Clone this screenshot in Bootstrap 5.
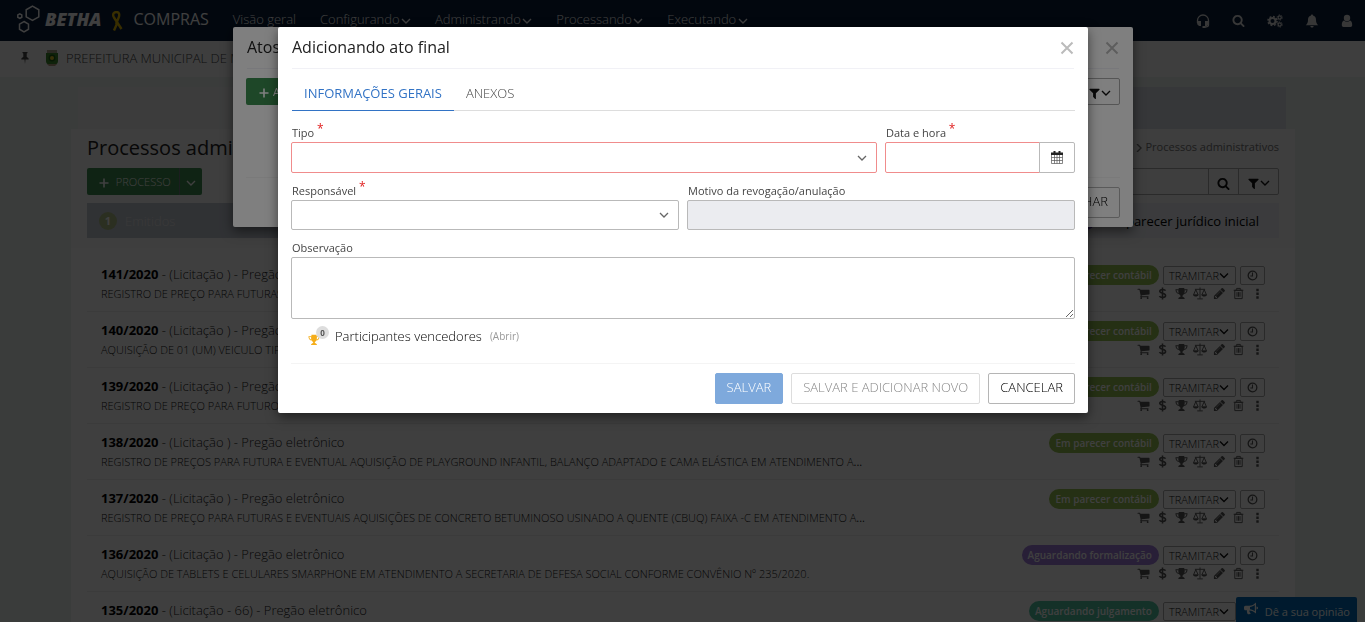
<!DOCTYPE html>
<html lang="pt-BR">
<head>
<meta charset="utf-8">
<meta name="viewport" content="width=device-width, initial-scale=1">
<title>Compras - Processos administrativos</title>
<link href="https://cdn.jsdelivr.net/npm/bootstrap@5.3.0/dist/css/bootstrap.min.css" rel="stylesheet">
<style>
body{font-family:"Open Sans","Noto Sans",sans-serif;font-size:13px;font-weight:300;line-height:20px;color:#444;background:#ebf0ee;overflow:hidden}
svg{fill:currentColor;flex:none}
.chev{fill:none;stroke:currentColor;stroke-width:1.4}
.btn,.form-control,.form-select{font-size:13px;font-weight:300;line-height:20px;border-radius:2px}
a{color:inherit;text-decoration:none}
.topbar{height:41px;background:#0a1e3a;color:#fff;padding:0 12px 0 16px}
.topbar nav{gap:24px;padding-bottom:3px}
.topbar nav svg{margin-left:-2px}
.topbar .tools{gap:22px;padding-bottom:3px;color:#ddd}
.brand{padding-bottom:4px}
.brand-name{font-size:18px;font-weight:800;font-style:italic}
.brand-app{font-size:16px}
.entity{height:36px;background:#f9f9f9;padding:0 20px 2px;color:#444}
.page-wrap{padding:10px 70px 0 71px}
.banner{height:42px;margin:0 9px 0 7px;background:linear-gradient(90deg,#f1f3f3 50%,#d9dce4 50%)}
.page-head{background:#f8f8f8;padding:7px 16px 10px}
.page-head h1{font-size:20px;line-height:24px;color:#222}
.crumbs{font-size:11px;font-weight:400;color:#777;padding-bottom:2px}
.btn-new{background:#3d8e50;color:#fff;height:27px;padding:0 9px;border:0;font-size:11px;font-weight:400}
.btn-new:hover{background:#337a43;color:#fff}
.btn-new.process{padding:0 9px 0 8px;font-weight:300}
.btn-new.split{padding:0 6px}
.btn-line{background:#fff;border:1px solid #aaa;color:#111;padding:0 8px}
.searchbox{width:300px;height:27px}
.searchbox .btn,.searchbox .form-control{background:transparent;border-color:#aaa}
.steps{height:35px;margin-top:8px;background:#c2c8d2;font-size:13px}
.steps .first-step{color:#e6e6e6}
.steps .last-step{background:#eceff5;color:#000;padding:0 20px 0 12px}
.dot{width:18px;height:18px;border-radius:50%;color:#fff;font-size:11px;font-weight:700;line-height:18px;text-align:center}
.records{background:#fff;padding:8px 16px 0}
.record{height:56px;padding:9px 14px 0;border-bottom:1px solid #eee}
.record h2{font-size:13px;line-height:19px;font-weight:300;color:#222;margin:0}
.record h2 b{color:#000;font-weight:700}
.record p{font-size:11px;line-height:19px;margin:0;color:#111}
.pill{font-size:10px;font-weight:600;color:#fff;height:20px;line-height:20px;padding:0 7px 0 6px;border-radius:10px}
.btn-flow{height:19px;line-height:17px;font-size:11px;padding:0 5px;display:flex;align-items:center}
.btn-flow.tram{padding:0 6px 0 5px}
.btn-flow.clock{width:25px;color:#555;justify-content:center}
.acts{height:17px;gap:5px;margin-right:1px;color:#555}
.acts a{width:14px;display:flex;justify-content:center}
.opinion{position:fixed;right:8px;bottom:0;height:25px;background:#006bb8;color:#fff;padding:5px 7px 0 8px;font-size:11px;font-weight:400;gap:7px;border-radius:2px 2px 0 0}
.modal{padding-left:1px;overflow:hidden}
.modal-backdrop{opacity:.5}
.modal-dialog{margin:27px auto 0}
.dialog-list{max-width:900px}
.dialog-form{max-width:810px}
.modal-content{border:0;border-radius:2px;box-shadow:0 4px 12px rgba(0,0,0,.5)}
.modal-header{padding:0 0 1px;margin:0 14px;height:42px;border-bottom:1px solid #f1f1f6;border-radius:0}
.modal-title{font-size:16px;line-height:22px;font-weight:400;color:#222}
.close-x{border:0;background:none;padding:2px 0 0;color:#bbb;line-height:0}
.modal-body{padding:0 13px}
.modal-footer{padding:9px 0;margin:0 13px;border-top:1px solid #f4f4f4;gap:8px;border-radius:0}
.modal-footer>*{margin:0}
.modal-footer .btn{height:31px;padding:0 11px 3px;border:1px solid #b5b5b5;color:#000}
.modal-footer .btn-save{background:#7ea9dc;border-color:#7ea9dc;color:#fff;opacity:1}
.modal-footer .btn-again{border-color:#ddd;color:#888;opacity:1}
.tabs-line{height:42px;border-bottom:1px solid #ddd;margin:0 0 0 1px}
.tabs-line .nav-link{color:#444;border:0;padding:14px 12px 6px;border-radius:0;height:42px}
.tabs-line .nav-link.active{color:#3273c5;font-weight:500;border-bottom:1px solid #3273c5}
.form-label{font-size:11px;font-weight:400;line-height:13px;height:13px;color:#444;margin:0 0 3px;padding-left:1px}
.form-label sup{color:#e02020;font-size:12px;top:-4px}
.field{padding-top:11px}
.form-area .form-control,.form-area .form-select,.form-area .input-group .btn{border:1px solid #b9b9b9;height:30px}
.form-area .form-control.needed,.form-area .form-select.needed{border-color:#f08c8c}
.form-area .first-line .form-control,.form-area .first-line .form-select,.form-area .first-line .btn{height:31px}
.form-area .first-line .btn{padding:0 11px;display:flex;align-items:center}
.form-area .first-line .field{padding-top:15px}
.form-select{background-size:10px;background-position:right 9px center;background-image:url("data:image/svg+xml,%3Csvg xmlns='http://www.w3.org/2000/svg' viewBox='0 0 10 10'%3E%3Cpath d='M1 3l4 4 4-4' fill='none' stroke='%23666' stroke-width='1.3'/%3E%3C/svg%3E")}
.form-area .form-control:disabled{background:#ebecf0}
.form-area textarea.form-control{height:62px;resize:vertical}
.winners{padding:7px 0 17px 17px;color:#000}
.winners a{font-size:10px;font-weight:400;color:#999}
.trophy{position:relative;width:23px;height:20px;color:#f5ae1b}
.trophy span{position:absolute;left:8px;top:0;width:13px;height:13px;border-radius:50%;background:#ddd;color:#555;font-size:8px;font-weight:700;line-height:13px;text-align:center}
.list-area{height:108px;padding-top:9px}
</style>
</head>
<body>
<svg width="0" height="0" class="position-absolute" aria-hidden="true">
<symbol id="search" viewBox="0 0 1792 1792"><path d="M1216 832q0-185-131.500-316.500t-316.500-131.500-316.500 131.500-131.500 316.500 131.500 316.500 316.500 131.500 316.500-131.500 131.500-316.500zm512 832q0 52-38 90t-90 38q-54 0-90-38l-343-342q-179 124-399 124-143 0-273.500-55.500t-225-150-150-225-55.500-273.500 55.500-273.500 150-225 225-150 273.500-55.500 273.500 55.500 225 150 150 225 55.500 273.500q0 220-124 399l343 343q37 37 37 90z"/></symbol>
<symbol id="filter" viewBox="0 0 1792 1792"><path d="M1595 295q17 41-14 70l-493 493v742q0 42-39 59-13 5-25 5-27 0-45-19l-256-256q-19-19-19-45v-486l-493-493q-31-29-14-70 17-39 59-39h1280q42 0 59 39z"/></symbol>
<symbol id="pencil" viewBox="0 0 1792 1792"><path d="M491 1536l91-91-235-235-91 91v107h128v128h107zm523-928q0-22-22-22-10 0-17 7l-542 542q-7 7-7 17 0 22 22 22 10 0 17-7l542-542q7-7 7-17zm-54-192l416 416-832 832h-416v-416zm683 96q0 53-37 90l-166 166-416-416 166-165q36-38 90-38 53 0 91 38l235 234q37 39 37 91z"/></symbol>
<symbol id="cart" viewBox="0 0 1792 1792"><path d="M704 1536q0 52-38 90t-90 38-90-38-38-90 38-90 90-38 90 38 38 90zm896 0q0 52-38 90t-90 38-90-38-38-90 38-90 90-38 90 38 38 90zm128-1088v512q0 24-16.500 42.500t-40.500 21.500l-1044 122q13 60 13 70 0 16-24 64h920q26 0 45 19t19 45-19 45-45 19h-1024q-26 0-45-19t-19-45q0-11 8-31.500t16-36 21.500-40 15.500-29.500l-177-823h-204q-26 0-45-19t-19-45 19-45 45-19h256q16 0 28.500 6.500t19.500 15.500 13 24.500 8 26 5.500 29.500 4.500 26h1201q26 0 45 19t19 45z"/></symbol>
<symbol id="down" viewBox="0 0 10 10"><path d="M1 3l4 4 4-4" class="chev"/></symbol>
<symbol id="cross" viewBox="0 0 14 14"><path d="M1.500 1.500l11 11M12.500 1.500l-11 11" fill="none" stroke="currentColor" stroke-width="2"/></symbol>
<symbol id="plus" viewBox="0 0 10 10"><path d="M5 .5v9M.5 5h9" fill="none" stroke="currentColor" stroke-width="1.600"/></symbol>
<symbol id="clock" viewBox="0 0 12 12"><path d="M6 3.300V6.500H4" fill="none" stroke="currentColor"/><circle cx="6" cy="6" r="4" fill="none" stroke="currentColor" stroke-width="1.200"/></symbol>
<symbol id="dollar" viewBox="0 0 10 14"><path d="M5 .5v13M8.300 4C7.600 2.600 2 1.800 2 4.700c0 2.700 6.300 1.500 6.300 4.500 0 2.900-5.600 2.500-6.600.7" fill="none" stroke="currentColor" stroke-width="1.700"/></symbol>
<symbol id="trophy" viewBox="0 0 14 14"><path d="M4 1h6v1.500h3.500c0 3.200-1.300 4.700-3.900 5C9 8.800 7.900 9 7.900 10c0 .9 2.600 1 2.600 2.800h-7c0-1.800 2.600-1.900 2.600-2.800 0-1-1.100-1.200-1.700-2.500C1.800 7.200.5 5.700.5 2.500H4zM1.600 3.500c.2 1.700.9 2.600 2.300 2.900-.3-.9-.4-1.900-.3-2.900zm8.800 0c0 1 0 2-.3 2.900 1.400-.3 2.100-1.200 2.300-2.900z"/></symbol>
<symbol id="scale" viewBox="0 0 16 14"><path d="M8 .5v12M2.500 2.500h11M5 12.800h6M3.500 2.800L1 8.500h5zM12.500 2.800L10 8.500h5z" fill="none" stroke="currentColor"/><path d="M.5 8.300h6c-.5 2.500-5.500 2.500-6 0zM9.500 8.300h6c-.5 2.500-5.500 2.500-6 0z"/></symbol>
<symbol id="trash" viewBox="0 0 12 14"><path d="M2 3.500h8v9H2zM.8 3.500h10.400M4 3V1.500h4V3M4.400 5.500v5M6 5.500v5M7.600 5.500v5" fill="none" stroke="currentColor"/></symbol>
<symbol id="dots" viewBox="0 0 4 14"><path d="M.7 2h2.600v2.600H.7zM.7 6h2.600v2.600H.7zM.7 10h2.600v2.600H.7z"/></symbol>
</svg>

<header class="topbar d-flex align-items-center justify-content-between">
 <div class="d-flex align-items-center">
  <div class="brand d-flex align-items-center">
   <svg width="25" height="28" viewBox="0 0 24 28"><g fill="none" stroke="#fff" stroke-width="1.500"><path d="M16 1.200l6.300 3.600v7L16 15.400l-6.300-3.600v-7z"/><path d="M7.500 16.500l4.500 2.600v5.100l-4.500 2.600L3 24.200v-5.100z"/><path d="M3.300 8.800l2 1.100v2.300l-2 1.100-2-1.100V9.900z"/></g></svg>
   <span class="brand-name ms-1">BETHA</span>
   <svg class="ms-2 mt-1" width="16" height="20" viewBox="0 0 14 20" aria-hidden="true"><path d="M4 19.500l3.500-8M11.500 18L4 6.500C2 3 4 1 6.500 1S10 3.500 8.500 7L6 13" fill="none" stroke="#e3b800" stroke-width="2.400"/></svg>
   <span class="brand-app ms-2 fw-normal">COMPRAS</span>
  </div>
  <nav class="d-flex ms-4">
   <a href="#">Visão geral</a>
   <a href="#">Configurando <svg width="10" height="10"><use href="#down"/></svg></a>
   <a href="#">Administrando <svg width="10" height="10"><use href="#down"/></svg></a>
   <a href="#">Processando <svg width="10" height="10"><use href="#down"/></svg></a>
   <a href="#">Executando <svg width="10" height="10"><use href="#down"/></svg></a>
  </nav>
 </div>
 <div class="tools d-flex align-items-center">
  <a href="#" aria-label="Suporte"><svg width="14" height="14" viewBox="0 0 14 14"><path d="M1.500 9V6.500a5.500 5.500 0 0 1 11 0V11c0 1.500-1 2-4 2" fill="none" stroke="currentColor" stroke-width="1.300"/><path d="M2 7h3v5H3L1 10zM12 7H9v5h2l2-2zM6.500 12h3v2h-3z"/></svg></a>
  <a href="#" aria-label="Pesquisar"><svg width="13" height="13"><use href="#search"/></svg></a>
  <a href="#" aria-label="Ajustes"><svg width="16" height="14" viewBox="0 0 16 14"><circle cx="5.500" cy="7" r="3" fill="none" stroke="currentColor" stroke-width="2"/><circle cx="5.500" cy="7" r="4.500" fill="none" stroke="currentColor" stroke-width="1.600" stroke-dasharray="1.800 1.730"/><g fill="none" stroke="currentColor"><circle cx="12.700" cy="3.500" r="1.600" stroke-width="1.200"/><circle cx="12.700" cy="3.500" r="2.600" stroke-dasharray="1.200 1.520"/><circle cx="12.700" cy="10.500" r="1.600" stroke-width="1.200"/><circle cx="12.700" cy="10.500" r="2.600" stroke-dasharray="1.200 1.520"/></g></svg></a>
  <a href="#" aria-label="Notificações"><svg width="14" height="14" viewBox="0 0 14 14"><path d="M7 .5c.7 0 1 .4 1 1C10.500 2 11 4 11 6c0 2.500.8 4 2.200 5.200H.8C2.200 10 3 8.500 3 6c0-2 .5-4 3-4.500 0-.6.300-1 1-1zM5.400 12h3.200c0 2-3.200 2-3.200 0z"/></svg></a>
  <a href="#" aria-label="Usuário"><svg width="12" height="14" viewBox="0 0 12 14"><circle cx="6" cy="4" r="3.200"/><path d="M3 6.500c1.800 1.700 4.200 1.700 6 0 1.500.5 2.200 2 2.200 4.500 0 1.200-.7 2-1.700 2h-7c-1 0-1.700-.8-1.700-2C.8 8.500 1.500 7 3 6.500z"/></svg></a>
 </div>
</header>
<div class="entity d-flex align-items-center">
 <svg width="10" height="12" viewBox="0 0 10 12"><path d="M2.500 0h5v1l-.8.600V5c1.300.5 2 1.200 2 2.400H5.500L5 12l-.5-4.600H1.300c0-1.200.7-1.900 2-2.400V1.600L2.500 1z"/></svg>
 <svg class="ms-3" width="12" height="18" viewBox="0 0 12 18"><path d="M1 1h10v3H1z" fill="#a8a08a"/><path d="M0 4h12v8c0 3-3 4-6 5-3-1-6-2-6-5z" fill="#3d8a2c"/><circle cx="6" cy="9" r="3.400" fill="#1d5c16"/><circle cx="6" cy="9" r="2" fill="#e0c020"/><path d="M1 15h10l-2 2H3z" fill="#b09b7c"/></svg>
 <a href="#" class="ms-2">PREFEITURA MUNICIPAL DE MOGI</a>
</div>

<main class="page-wrap">
 <div class="banner"></div>
 <section class="page-head">
  <div class="d-flex justify-content-between align-items-center">
   <h1 class="mb-0 fw-normal">Processos administrativos</h1>
   <div class="crumbs">Executando <svg width="8" height="8" viewBox="0 0 8 8"><path d="M2 0l4 4-4 4" class="chev"/></svg> <a href="#">Processos administrativos</a></div>
  </div>
  <div class="d-flex justify-content-between mt-2">
   <div class="btn-group"><button class="btn btn-new process"><svg width="10" height="10" class="me-1 ms-1"><use href="#plus"/></svg> PROCESSO</button><button class="btn btn-new split border-start border-secondary" aria-label="Mais opções"><svg width="10" height="10"><use href="#down"/></svg></button></div>
   <div class="searchbox input-group flex-nowrap"><input class="form-control" aria-label="Pesquisar processos"><button class="btn btn-line" aria-label="Pesquisar"><svg width="13" height="13"><use href="#search"/></svg></button><button class="btn btn-line" aria-label="Filtrar"><svg width="13" height="13"><use href="#filter"/></svg><svg width="10" height="10"><use href="#down"/></svg></button></div>
  </div>
  <div class="steps d-flex justify-content-between">
   <div class="first-step d-flex align-items-center ms-2 ps-1 gap-2"><span class="dot" style="background:#aebd86">1</span><span>Emitidos</span></div>
   <div class="last-step d-flex align-items-center gap-2 fw-normal"><span class="dot" style="background:#6a3fc0">1</span><span>Em parecer jurídico inicial</span></div>
  </div>
 </section>
 <section class="records" id="records"></section>
</main>
<a href="#" class="opinion d-flex"><svg width="14" height="14" viewBox="0 0 14 14"><path d="M12 .5v11C9.500 9.300 8 8.600 5.500 8.400c-.5 1 .2 2 1.300 3.200-.8 1-2.500.9-3.200.3C3 10.500 2.700 9.500 3 8.300H1.500C.5 8.300 0 7.500 0 6.500v-1c0-1 .5-1.700 1.500-1.700H5C8 3.800 10 2.500 12 .5zm-1.200 2.400C9.300 4.100 8 4.600 6 4.900v2.300c2 .3 3.300.8 4.800 2zM12.500 4.500c2 0 2 3 0 3z"/></svg><span>Dê a sua opinião</span></a>

<div class="modal-backdrop" style="z-index:1040"></div>
<div class="modal d-block" style="z-index:1045" aria-hidden="true">
 <div class="modal-dialog dialog-list"><div class="modal-content">
  <div class="modal-header"><h5 class="modal-title">Atos finais</h5><button class="close-x" aria-label="Fechar janela"><svg width="14" height="14"><use href="#cross"/></svg></button></div>
  <div class="modal-body list-area d-flex justify-content-between align-items-start">
   <button class="btn btn-new"><svg width="10" height="10" class="me-1 ms-1"><use href="#plus"/></svg>ADICIONAR</button>
   <button class="btn btn-line" style="height:27px" aria-label="Filtrar atos"><svg width="13" height="13"><use href="#filter"/></svg><svg width="10" height="10"><use href="#down"/></svg></button>
  </div>
  <div class="modal-footer"><button class="btn">FECHAR</button></div>
 </div></div>
</div>

<div class="modal-backdrop"></div>
<div class="modal d-block" role="dialog" aria-labelledby="formTitle">
 <div class="modal-dialog dialog-form"><form class="modal-content">
  <div class="modal-header"><h5 class="modal-title" id="formTitle">Adicionando ato final</h5><button type="button" class="close-x" aria-label="Fechar"><svg width="14" height="14"><use href="#cross"/></svg></button></div>
  <div class="modal-body form-area">
   <div class="tabs-line nav"><a class="nav-link active" href="#">INFORMAÇÕES GERAIS</a><a class="nav-link" href="#">ANEXOS</a></div>
   <div class="row gx-2 first-line">
    <div class="col-9 field"><label class="form-label d-block" for="tipo">Tipo <sup>*</sup></label><select class="form-select needed" id="tipo"></select></div>
    <div class="col-3 field"><label class="form-label d-block" for="data">Data e hora <sup>*</sup></label>
     <div class="input-group flex-nowrap"><input class="form-control needed" id="data"><button type="button" class="btn" aria-label="Abrir calendário"><svg width="12" height="13" viewBox="0 0 12 13"><path d="M.5 3.500h11v9H.5zM3.500 3.500v9M6 3.500v9M8.500 3.500v9M.5 6.500h11M.5 9.500h11" fill="none" stroke="#555" stroke-width=".7"/><path d="M0 1.500h12v2.500H0zM2.500 0h2v3h-2zM7.500 0h2v3h-2z" fill="#222"/></svg></button></div></div>
   </div>
   <div class="row gx-2">
    <div class="col-6 field"><label class="form-label d-block" for="resp">Responsável <sup>*</sup></label><select class="form-select" id="resp"></select></div>
    <div class="col-6 field"><label class="form-label d-block" for="motivo">Motivo da revogação/anulação</label><input class="form-control" id="motivo" disabled></div>
   </div>
   <div class="field"><label class="form-label d-block" for="obs">Observação</label><textarea class="form-control" id="obs"></textarea></div>
   <div class="winners d-flex align-items-center"><span class="trophy"><svg class="mt-1" width="12" height="14"><use href="#trophy"/></svg><span>0</span></span><span class="ms-1">Participantes vencedores</span><a href="#" class="ms-2">(Abrir)</a></div>
  </div>
  <div class="modal-footer"><button type="button" class="btn btn-save" disabled>SALVAR</button><button type="button" class="btn btn-again" disabled>SALVAR E ADICIONAR NOVO</button><button type="button" class="btn">CANCELAR</button></div>
 </form></div>
</div>

<script>
const icon = (id, w = 13) => `<svg width="${w}" height="13"><use href="#${id}"/></svg>`;
const green = ['Em parecer contábil', '#94c050'];
const records = [
 ['141/2020', '(Licitação )', 'REGISTRO DE PREÇO PARA FUTURAS', green],
 ['140/2020', '(Licitação )', 'AQUISIÇÃO DE 01 (UM) VEICULO TIPO', green],
 ['139/2020', '(Licitação )', 'REGISTRO DE PREÇO PARA FUTURO', green],
 ['138/2020', '(Licitação )', 'REGISTRO DE PREÇOS PARA FUTURA E EVENTUAL AQUISIÇÃO DE PLAYGROUND INFANTIL, BALANÇO ADAPTADO E CAMA ELÁSTICA EM ATENDIMENTO A<b>...</b>', green],
 ['137/2020', '(Licitação )', 'REGISTRO DE PREÇO PARA FUTURAS E EVENTUAIS AQUISIÇÕES DE CONCRETO BETUMINOSO USINADO A QUENTE (CBUQ) FAIXA -C EM ATENDIMENTO A<b>...</b>', green],
 ['136/2020', '(Licitação )', 'AQUISIÇÃO DE TABLETS E CELULARES SMARPHONE EM ATENDIMENTO A SECRETARIA DE DEFESA SOCIAL CONFORME CONVÊNIO Nº 235/2020.', ['Aguardando formalização', '#a07cdc']],
 ['135/2020', '(Licitação - 66)', '', ['Aguardando julgamento', '#52c4a2']]
];
const actions = [['cart', 'Compra'], ['dollar', 'Valores'], ['trophy', 'Vencedores'], ['scale', 'Julgamento'], ['pencil', 'Editar'], ['trash', 'Excluir'], ['dots', 'Mais']];
document.getElementById('records').innerHTML = records.map(([num, kind, text, [state, color]]) => `
<article class="record d-flex justify-content-between">
 <div><h2><b>${num}</b> - ${kind} - Pregão eletrônico</h2><p>${text}</p></div>
 <div>
  <div class="d-flex gap-1 align-items-center"><span class="pill" style="background:${color}">${state}</span><button class="btn btn-line btn-flow tram">TRAMITAR${icon('down', 10)}</button><button class="btn btn-line btn-flow clock" aria-label="Histórico">${icon('clock')}</button></div>
  <div class="acts d-flex align-items-center justify-content-end">${actions.map(([id, name]) => `<a href="#" aria-label="${name}">${icon(id, id === 'scale' ? 16 : 13)}</a>`).join('')}</div>
 </div>
</article>`).join('');
</script>
<script src="https://cdn.jsdelivr.net/npm/bootstrap@5.3.0/dist/js/bootstrap.bundle.min.js"></script>
</body>
</html>
